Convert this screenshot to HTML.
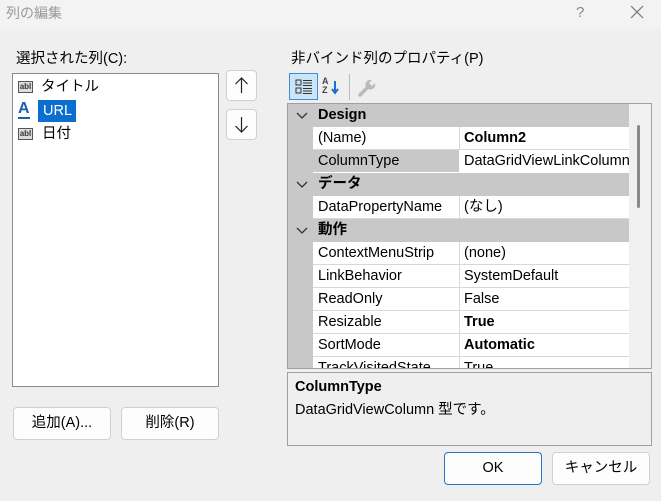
<!DOCTYPE html>
<html><head><meta charset="utf-8"><style>
*{margin:0;padding:0;box-sizing:border-box}
body{width:661px;height:501px;background:#efefef;font-family:"Liberation Sans","Noto Sans CJK JP",sans-serif;font-size:14.5px;line-height:17px;color:#000;position:relative;overflow:hidden}
.a{position:absolute;white-space:nowrap}
.btn{position:absolute;background:#fdfdfd;border:1px solid #d0d0d0;border-radius:4px;text-align:center;font-size:14.5px}
.row{position:absolute;left:313px;width:316px;height:23px;background:#fff;border-bottom:1px solid #d8d8d8}
.row .n{position:absolute;left:5px;top:3px}
.row .v{position:absolute;left:146px;top:0;height:22px;border-left:1px solid #d8d8d8;padding-left:4px;padding-top:3px;width:170px;overflow:hidden}
.cat{position:absolute;left:288px;width:341px;height:23px;background:#c8c8c8}
.cat .c{position:absolute;left:30px;top:3px;font-weight:bold}
.cat svg{position:absolute;left:8px;top:8px}
</style></head><body>
<div class="a" style="left:0;top:0;width:661px;height:29px;background:#f3f3f3"></div>
<div class="a" style="left:6px;top:5px;color:#999;font-size:14px">列の編集</div>
<div class="a" style="left:576px;top:4px;color:#888;font-size:15px">?</div>
<svg class="a" style="left:630px;top:5px" width="14" height="14"><path d="M1 1L13 13M13 1L1 13" stroke="#777" stroke-width="1.2"/></svg>

<div class="a" style="left:16px;top:51px">選択された列(C):</div>
<div class="a" style="left:12px;top:73px;width:207px;height:314px;background:#fff;border:1px solid #8a8a94"></div>
<div class="a" style="left:18px;top:81px;width:15px;height:12px;border:1px solid #555;background:#ddd;font-size:8px;line-height:10px;font-weight:bold;text-align:center;color:#333">abl</div>
<div class="a" style="left:41px;top:79px">タイトル</div>
<div class="a" style="left:18px;top:101px;color:#1d5fa8;font-weight:bold;font-size:16px;border-bottom:2px solid #1d5fa8;line-height:16px">A</div>
<div class="a" style="left:38px;top:100px;width:38px;height:22px;background:#0a6fcf;color:#fff;padding:3px 5px">URL</div>
<div class="a" style="left:18px;top:128px;width:15px;height:12px;border:1px solid #555;background:#ddd;font-size:8px;line-height:10px;font-weight:bold;text-align:center;color:#333">abl</div>
<div class="a" style="left:42px;top:126px">日付</div>

<div class="btn" style="left:226px;top:70px;width:31px;height:31px"><svg width="29" height="29"><path d="M14.5 7V22M8.5 13L14.5 7L20.5 13" stroke="#222" fill="none" stroke-width="1.2"/></svg></div>
<div class="btn" style="left:226px;top:109px;width:31px;height:31px"><svg width="29" height="29"><path d="M14.5 7V22M8.5 16L14.5 22L20.5 16" stroke="#222" fill="none" stroke-width="1.2"/></svg></div>

<div class="btn" style="left:13px;top:407px;width:98px;height:33px;line-height:31px">追加(A)...</div>
<div class="btn" style="left:121px;top:407px;width:98px;height:33px;line-height:31px">削除(R)</div>

<div class="a" style="left:291px;top:51px">非バインド列のプロパティ(P)</div>
<div class="a" style="left:289px;top:73px;width:29px;height:27px;background:#cce4f7;border:1px solid #3d8ee0"></div>
<svg class="a" style="left:295px;top:79px" width="18" height="16"><rect x="1" y="1" width="5" height="5" fill="none" stroke="#333"/><rect x="1" y="9" width="5" height="5" fill="none" stroke="#333"/><path d="M8 1.5h9M8 4h9M8 6.5h9M8 9.5h9M8 12h9M8 14.5h9" stroke="#333"/></svg>
<div class="a" style="left:322px;top:77px;font-size:9px;font-weight:bold;line-height:9px;color:#444">A<br>Z</div>
<svg class="a" style="left:330px;top:80px" width="10" height="16"><path d="M5 1V12M2 9L5 13L8 9" stroke="#1a6fd0" fill="none" stroke-width="2"/></svg>
<div class="a" style="left:349px;top:74px;width:1px;height:26px;background:#bbb"></div>
<svg class="a" style="left:357px;top:78px" width="20" height="20"><path d="M3 17L10 10" stroke="#bbb" stroke-width="3.5" stroke-linecap="round"/><path d="M9 9a5 5 0 0 1 6-7l-3 3 3 3 3-3a5 5 0 0 1-7 6z" fill="#bbb"/></svg>

<div class="a" style="left:287px;top:103px;width:365px;height:266px;border:1px solid #a0a0a0;background:#f0f0f0;overflow:hidden"></div>
<div class="a" style="left:288px;top:104px;width:25px;height:264px;background:#c8c8c8"></div>
<div class="cat" style="top:104px"><svg width="12" height="8"><path d="M1 1L6 6L11 1" stroke="#333" fill="none" stroke-width="1.3"/></svg><span class="c">Design</span></div>
<div class="row" style="top:127px"><span class="n">(Name)</span><span class="v" style="font-weight:bold">Column2</span></div>
<div class="row" style="top:150px;background:#c8c8c8;border-bottom-color:#fff"><span class="n">ColumnType</span><span class="v" style="background:#fff;border-left-color:#fff">DataGridViewLinkColumn</span></div>
<div class="cat" style="top:173px"><svg width="12" height="8"><path d="M1 1L6 6L11 1" stroke="#333" fill="none" stroke-width="1.3"/></svg><span class="c">データ</span></div>
<div class="row" style="top:196px"><span class="n">DataPropertyName</span><span class="v">(なし)</span></div>
<div class="cat" style="top:219px"><svg width="12" height="8"><path d="M1 1L6 6L11 1" stroke="#333" fill="none" stroke-width="1.3"/></svg><span class="c">動作</span></div>
<div class="row" style="top:242px"><span class="n">ContextMenuStrip</span><span class="v">(none)</span></div>
<div class="row" style="top:265px"><span class="n">LinkBehavior</span><span class="v">SystemDefault</span></div>
<div class="row" style="top:288px"><span class="n">ReadOnly</span><span class="v">False</span></div>
<div class="row" style="top:311px"><span class="n">Resizable</span><span class="v" style="font-weight:bold">True</span></div>
<div class="row" style="top:334px"><span class="n">SortMode</span><span class="v" style="font-weight:bold">Automatic</span></div>
<div class="row" style="top:357px;height:11px;overflow:hidden;border:none"><span class="n">TrackVisitedState</span><span class="v">True</span></div>
<div class="a" style="left:637px;top:125px;width:3px;height:83px;background:#8a8a8a;border-radius:2px"></div>

<div class="a" style="left:287px;top:372px;width:365px;height:74px;border:1px solid #a0a0a0"></div>
<div class="a" style="left:295px;top:379px;font-weight:bold">ColumnType</div>
<div class="a" style="left:295px;top:402px">DataGridViewColumn 型です。</div>

<div class="btn" style="left:444px;top:452px;width:98px;height:33px;line-height:31px;border-color:#2a74c8">OK</div>
<div class="btn" style="left:552px;top:452px;width:98px;height:33px;line-height:31px">キャンセル</div>
</body></html>
